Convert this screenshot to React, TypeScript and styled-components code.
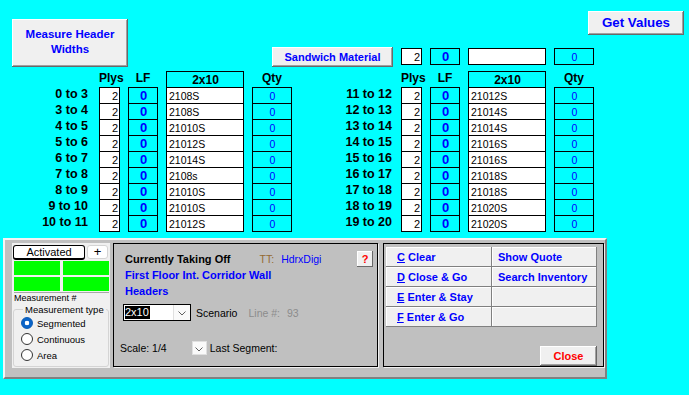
import React from "react";
import styled, { createGlobalStyle } from "styled-components";

type Row = { label: string; material: string };
type CellKind = "plys" | "lf" | "text" | "qty" | "head";

const leftRows: Row[] = [
  { label: "0 to 3", material: "2108S" },
  { label: "3 to 4", material: "2108S" },
  { label: "4 to 5", material: "21010S" },
  { label: "5 to 6", material: "21012S" },
  { label: "6 to 7", material: "21014S" },
  { label: "7 to 8", material: "2108s" },
  { label: "8 to 9", material: "21010S" },
  { label: "9 to 10", material: "21010S" },
  { label: "10 to 11", material: "21012S" },
];

const rightRows: Row[] = [
  { label: "11 to 12", material: "21012S" },
  { label: "12 to 13", material: "21014S" },
  { label: "13 to 14", material: "21014S" },
  { label: "14 to 15", material: "21016S" },
  { label: "15 to 16", material: "21016S" },
  { label: "16 to 17", material: "21018S" },
  { label: "17 to 18", material: "21018S" },
  { label: "18 to 19", material: "21020S" },
  { label: "19 to 20", material: "21020S" },
];

const actions = [
  { key: "C", text: "Clear", side: "Show Quote" },
  { key: "D", text: "Close & Go", side: "Search Inventory" },
  { key: "E", text: "Enter & Stay", side: "" },
  { key: "F", text: "Enter & Go", side: "" },
];

const GlobalStyle = createGlobalStyle`
  body {
    margin: 0;
    background: #00ffff;
    font-family: "Liberation Sans", Arial, sans-serif;
  }
`;

const Chevron = () => (
  <svg width="8" height="5" viewBox="0 0 8 5">
    <polyline points="0.5,0.5 4,4 7.5,0.5" fill="none" stroke="#606060" strokeWidth="1" />
  </svg>
);

const TakeoffTable = ({ rows, labelWidth, labelPad }: { rows: Row[]; labelWidth: number; labelPad: number }) => (
  <Table $labelW={labelWidth}>
    <span />
    <HeadLabel>Plys</HeadLabel>
    <HeadLabel>LF</HeadLabel>
    <Cell $kind="head">2x10</Cell>
    <HeadLabel>Qty</HeadLabel>
    {rows.map((r) => (
      <React.Fragment key={r.label}>
        <RowLabel $pad={labelPad}>{r.label}</RowLabel>
        <Cell $kind="plys">2</Cell>
        <Cell $kind="lf">0</Cell>
        <Cell $kind="text">{r.material}</Cell>
        <Cell $kind="qty">0</Cell>
      </React.Fragment>
    ))}
  </Table>
);

const App = () => {
  return (
    <Page>
      <GlobalStyle />
      <TopSection>
        <MeasureButton $w={116} $h={48} $size={11.5}>
          Measure Header
          <br />
          Widths
        </MeasureButton>
        <TopRight>
          <GetValues $w={96} $h={24} $size={13.3}>
            Get Values
          </GetValues>
          <SandwichRow>
            <WinButton $w={121} $h={20}>
              Sandwich Material
            </WinButton>
            <Cell $kind="plys" $w={21}>2</Cell>
            <Cell $kind="lf" $w={30}>0</Cell>
            <Cell $kind="text" $w={78} />
            <Cell $kind="qty" $w={40}>0</Cell>
          </SandwichRow>
        </TopRight>
      </TopSection>

      <TablesRow>
        <TakeoffTable rows={leftRows} labelWidth={83} labelPad={3} />
        <TakeoffTable rows={rightRows} labelWidth={101} labelPad={1} />
      </TablesRow>

      <BottomPanel>
        <MeasureBox>
          <ActRow>
            <ActButton>Activated</ActButton>
            <PlusButton>+</PlusButton>
          </ActRow>
          <GreenGrid>
            <GreenCell />
            <GreenCell />
            <GreenCell />
            <GreenCell />
          </GreenGrid>
          <SmallText>Measurement #</SmallText>
          <TypeSet>
            <TypeLegend>Measurement type</TypeLegend>
            <RadioRow>
              <RadioDot $on />
              Segmented
            </RadioRow>
            <RadioRow>
              <RadioDot />
              Continuous
            </RadioRow>
            <RadioRow>
              <RadioDot />
              Area
            </RadioRow>
          </TypeSet>
        </MeasureBox>

        <InfoPanel>
          <TitleRow>
            <Title>Currently Taking Off</Title>
            <TTLabel>TT:</TTLabel>
            <TTValue>HdrxDigi</TTValue>
            <HelpButton>?</HelpButton>
          </TitleRow>
          <BlueTitle>First Floor Int. Corridor Wall Headers</BlueTitle>
          <ComboRow>
            <Combo>
              <ComboText>2x10</ComboText>
              <ComboArrow>
                <Chevron />
              </ComboArrow>
            </Combo>
            <Plain $ml={5}>Scenario</Plain>
            <Plain $ml={11} $muted>Line #:</Plain>
            <Plain $ml={7} $muted>93</Plain>
          </ComboRow>
          <ScaleRow>
            <Plain>Scale: 1/4</Plain>
            <MiniDrop>
              <Chevron />
            </MiniDrop>
            <Plain $ml={3}>Last Segment:</Plain>
          </ScaleRow>
        </InfoPanel>

        <ActionPanel>
          <ActionGrid>
            {actions.map((a) => (
              <React.Fragment key={a.key}>
                <ActionButton $pad={11}>
                  <u>{a.key}</u> {a.text}
                </ActionButton>
                <ActionButton $pad={6}>{a.side}</ActionButton>
              </React.Fragment>
            ))}
          </ActionGrid>
          <CloseButton $w={57} $h={20} $color="#ff0000">
            Close
          </CloseButton>
        </ActionPanel>
      </BottomPanel>
    </Page>
  );
};

const Page = styled.div`
  width: 689px;
  height: 395px;
  overflow: hidden;
  background: #00ffff;
  color: #000;
`;

const TopSection = styled.div`
  display: flex;
  align-items: flex-start;
  height: 67px;
  box-sizing: border-box;
  padding: 11px 5px 0 12px;
`;

const WinButton = styled.button<{ $w: number; $h: number; $size?: number; $color?: string }>`
  width: ${({ $w }) => $w}px;
  height: ${({ $h }) => $h}px;
  flex: none;
  padding: 0;
  border: none;
  background: #f0f0f0;
  box-shadow: inset -1px -1px 0 #696969, inset 1px 1px 0 #ffffff, inset -2px -2px 0 #a0a0a0;
  font-family: "Liberation Sans", Arial, sans-serif;
  font-weight: bold;
  font-size: ${({ $size }) => $size ?? 11}px;
  line-height: 1.3;
  color: ${({ $color }) => $color ?? "#0000ff"};
`;

const MeasureButton = styled(WinButton)`
  margin-top: 8px;
  padding-bottom: 2px;
`;

const TopRight = styled.div`
  flex: 1;
  margin-left: 144px;
  display: flex;
  flex-direction: column;
`;

const GetValues = styled(WinButton)`
  align-self: flex-end;
`;

const SandwichRow = styled.div`
  display: flex;
  align-items: flex-start;
  gap: 8px;
  margin-top: 12px;

  & > div {
    margin-top: 1px;
  }
`;

const cellLook: Record<CellKind, string> = {
  plys: "background:#fff; justify-content:flex-end; font-size:11px; color:#000;",
  lf: "background:transparent; justify-content:center; font-size:13px; font-weight:bold; color:#0000ff;",
  text: "background:#fff; justify-content:flex-start; font-size:10.5px; color:#000;",
  qty: "background:transparent; justify-content:center; font-size:10.5px; color:#0000ff;",
  head: "background:transparent; justify-content:center; font-size:12px; font-weight:bold; color:#000;",
};

const Cell = styled.div<{ $kind: CellKind; $w?: number }>`
  box-sizing: border-box;
  height: 17px;
  ${({ $w }) => ($w ? `width: ${$w}px;` : "")}
  border: 1px solid #000;
  display: flex;
  align-items: center;
  padding: 0 1px 0 2px;
  white-space: nowrap;
  ${({ $kind }) => cellLook[$kind]}
`;

const TablesRow = styled.div`
  display: flex;
  margin-top: 4px;
  padding-left: 8px;
`;

const Table = styled.div<{ $labelW: number }>`
  display: grid;
  grid-template-columns: ${({ $labelW }) => $labelW}px 21px 30px 78px 40px;
  grid-auto-rows: 16px;
  column-gap: 8px;
  align-items: start;
`;

const HeadLabel = styled.div`
  font-size: 12px;
  font-weight: bold;
  text-align: center;
  line-height: 15px;
`;

const RowLabel = styled.div<{ $pad: number }>`
  font-size: 12.5px;
  font-weight: bold;
  text-align: right;
  padding-right: ${({ $pad }) => $pad}px;
  line-height: 15px;
  white-space: nowrap;
`;

const BottomPanel = styled.div`
  margin: 7px 0 0 3px;
  width: 604px;
  height: 141px;
  box-sizing: border-box;
  background: #c0c0c0;
  border: 2px solid;
  border-color: #f4f4f4 #808080 #808080 #f4f4f4;
  padding: 3px 1px 0 7px;
  display: flex;
  align-items: flex-start;
`;

const MeasureBox = styled.div`
  width: 98px;
  height: 125px;
  box-sizing: border-box;
  background: #f0f0f0;
  padding: 2px 1px 0 1px;
  display: flex;
  flex-direction: column;
`;

const ActRow = styled.div`
  display: flex;
  gap: 2px;
`;

const ActButton = styled.div`
  width: 72px;
  height: 15px;
  box-sizing: border-box;
  background: #fff;
  border: 1px solid #000;
  border-bottom-width: 2px;
  border-radius: 3px;
  font-size: 11px;
  line-height: 12px;
  text-align: center;
`;

const PlusButton = styled.div`
  width: 21px;
  height: 14px;
  box-sizing: border-box;
  background: #fff;
  border: 1px solid #d4d4d4;
  border-radius: 3px;
  font-size: 13px;
  line-height: 12px;
  text-align: center;
`;

const GreenGrid = styled.div`
  display: grid;
  grid-template-columns: 46px 46px;
  grid-auto-rows: 14px;
  gap: 2px 3px;
  margin: 1px 0 0 1px;
  padding-bottom: 1px;
  border-bottom: 1px solid #a8a8a8;
  width: 95px;
`;

const GreenCell = styled.div`
  background: #00ff00;
`;

const SmallText = styled.div`
  font-size: 9px;
  line-height: 11px;
  margin-left: 1px;
`;

const TypeSet = styled.fieldset`
  margin: 0 0 1px 0;
  padding: 0 0 2px 7px;
  min-width: 0;
  border: 1px solid #d4d4d4;
  border-radius: 3px;
  flex: 1;
`;

const TypeLegend = styled.legend`
  font-size: 9.5px;
  line-height: 11px;
  padding: 0 2px;
  margin-left: 2px;
  white-space: nowrap;
`;

const RadioRow = styled.div`
  display: flex;
  align-items: center;
  gap: 4px;
  height: 16px;
  font-size: 9.5px;
`;

const RadioDot = styled.span<{ $on?: boolean }>`
  width: 12px;
  height: 12px;
  box-sizing: border-box;
  border-radius: 50%;
  border: 1px solid ${({ $on }) => ($on ? "#0a5ab4" : "#333")};
  background: ${({ $on }) => ($on ? "radial-gradient(circle, #fff 0 2px, #0a64c8 2.6px)" : "#fff")};
`;

const InfoPanel = styled.div`
  width: 265px;
  height: 124px;
  margin-left: 3px;
  box-sizing: border-box;
  border: 1px solid #000;
  box-shadow: 1px 1px 0 #f0f0f0;
  padding: 7px 4px 0 5px;
  display: flex;
  flex-direction: column;
`;

const TitleRow = styled.div`
  display: flex;
  align-items: center;
  height: 16px;
  padding-left: 6px;
`;

const Title = styled.span`
  font-size: 11px;
  font-weight: bold;
`;

const TTLabel = styled.span`
  margin-left: 29px;
  font-size: 10.5px;
  color: #946a32;
`;

const TTValue = styled.span`
  margin-left: 7px;
  font-size: 10.5px;
  color: #0000ff;
`;

const HelpButton = styled.div`
  margin-left: auto;
  width: 16px;
  height: 16px;
  box-sizing: border-box;
  background: #f0f0f0;
  box-shadow: inset -1px -1px 0 #696969, inset 1px 1px 0 #fff;
  color: #ff0000;
  font-size: 11px;
  font-weight: bold;
  line-height: 16px;
  text-align: center;
`;

const BlueTitle = styled.div`
  padding-left: 6px;
  max-width: 190px;
  font-size: 11px;
  font-weight: bold;
  color: #0000ff;
  line-height: 16px;
`;

const ComboRow = styled.div`
  display: flex;
  align-items: center;
  margin-top: 5px;
  padding-left: 4px;
  height: 17px;
`;

const Combo = styled.div`
  width: 68px;
  height: 17px;
  box-sizing: border-box;
  border: 1px solid #000;
  background: #fff;
  display: flex;
  align-items: center;
  padding-left: 1px;
`;

const ComboText = styled.span`
  background: #000;
  color: #fff;
  font-size: 11px;
  line-height: 13px;
  padding-right: 1px;
`;

const ComboArrow = styled.span`
  margin-left: auto;
  width: 17px;
  height: 15px;
  box-sizing: border-box;
  border-left: 1px solid #e0e0e0;
  background: #fafafa;
  display: flex;
  align-items: center;
  justify-content: center;
  padding-top: 2px;
`;

const Plain = styled.span<{ $ml?: number; $muted?: boolean }>`
  margin-left: ${({ $ml }) => $ml ?? 0}px;
  font-size: 10.5px;
  color: ${({ $muted }) => ($muted ? "#8c8c8c" : "#000")};
  white-space: nowrap;
`;

const ScaleRow = styled.div`
  display: flex;
  align-items: center;
  margin-top: 20px;
  padding-left: 1px;
  height: 14px;
`;

const MiniDrop = styled.span`
  margin-left: 25px;
  width: 15px;
  height: 14px;
  box-sizing: border-box;
  background: #fafafa;
  border: 1px solid #e0e0e0;
  display: flex;
  align-items: center;
  justify-content: center;
  padding-top: 2px;
`;

const ActionPanel = styled.div`
  width: 221px;
  height: 124px;
  margin-left: 5px;
  box-sizing: border-box;
  border: 1px solid #000;
  box-shadow: 1px 1px 0 #f0f0f0;
  padding: 3px 6px 0 2px;
  display: flex;
  flex-direction: column;
`;

const ActionGrid = styled.div`
  display: grid;
  grid-template-columns: 106px 105px;
  grid-auto-rows: 20px;
`;

const ActionButton = styled.div<{ $pad: number }>`
  box-sizing: border-box;
  background: #f0f0f0;
  box-shadow: inset -1px -1px 0 #808080, inset 1px 1px 0 #fff;
  padding-left: ${({ $pad }) => $pad}px;
  font-size: 11px;
  font-weight: bold;
  color: #0000ff;
  line-height: 20px;
  white-space: nowrap;
`;

const CloseButton = styled(WinButton)`
  margin-top: auto;
  align-self: flex-end;
`;

export default App;
